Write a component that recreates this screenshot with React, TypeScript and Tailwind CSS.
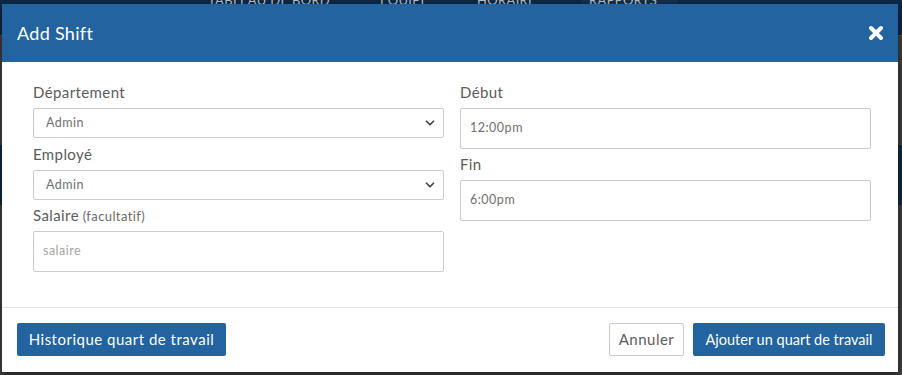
import { ChevronDown } from "lucide-react";

const font = { fontFamily: "Lato, 'Open Sans', sans-serif" };

function Field({ label, hint, value, placeholder, select, tall, className }: {
  label: string;
  hint?: string;
  value?: string;
  placeholder?: string;
  select?: boolean;
  tall?: boolean;
  className?: string;
}) {
  return (
    <div className={className}>
      <div className="h-[20px] leading-[20px] text-[15px] tracking-[0.4px] text-[#5c5c5c]">
        {label}
        {hint && <span className="text-[13px] text-[#6a6a6a]"> {hint}</span>}
      </div>
      <div
        className={`mt-[6px] flex items-center justify-between border border-[#ccc] rounded-[2px] bg-white ${
          tall ? "h-[41px] pl-[9px]" : "h-[30px] pl-[12px] pr-[6px]"
        }`}
      >
        <span className={`text-[12.5px] tracking-[0.5px] ${value ? "text-[#707070]" : "text-[#a5a5a5]"}`}>
          {value ?? placeholder}
        </span>
        {select && <ChevronDown size={14} strokeWidth={3} className="text-[#444]" />}
      </div>
    </div>
  );
}

export default function App() {
  return (
    <div className="relative w-[902px] h-[375px] overflow-hidden bg-[#3f3f3f]" style={font}>
      {/* page behind the modal */}
      <div className="h-[44px] bg-[#0e2946] flex text-[13px] tracking-wide text-[#b8c3cf] -mt-[9px]">
        <div className="w-[200px]" />
        <div className="px-[8px]">TABLEAU DE BORD</div>
        <div className="ml-[42px] w-[52px]">EQUIPE</div>
        <div className="ml-[45px] w-[60px]">HORAIRE</div>
        <div className="ml-[44px] pl-[8px] pr-[20px] bg-[#142f4e]">RAPPORTS</div>
      </div>
      <div className="h-[110px] border-t border-[#555]" />
      <div className="h-[60px] bg-[#0e2946]" />

      {/* modal */}
      <div className="absolute left-[2px] top-[4px] w-[896px] h-[368px] bg-white flex flex-col shadow-[0_3px_9px_rgba(0,0,0,0.5)]">
        <div className="h-[58px] bg-[#23639f] flex items-center justify-between pl-[15px] pr-[14px]">
          <span className="text-[18px] tracking-[0.3px] text-white">Add Shift</span>
          <svg width="16" height="16" viewBox="0 0 16 16">
            <path d="M3 3 L13 13 M13 3 L3 13" stroke="white" strokeWidth="4" strokeLinecap="round" />
          </svg>
        </div>

        <div className="grid grid-cols-2 gap-x-[16px] pl-[31px] pr-[27px] pt-[20px] h-[245px]">
          <div>
            <Field label="Département" value="Admin" select />
            <Field label="Employé" value="Admin" select className="mt-[6px]" />
            <Field label="Salaire" hint="(facultatif)" placeholder="salaire" tall className="mt-[5px]" />
          </div>
          <div>
            <Field label="Début" value="12:00pm" tall />
            <Field label="Fin" value="6:00pm" tall className="mt-[5px]" />
          </div>
        </div>

        <div className="flex-1 border-t border-[#e5e5e5] flex items-start justify-between pt-[15px] pl-[15px] pr-[13px]">
          <button className="h-[33px] w-[209px] bg-[#23639f] text-white text-[15px] tracking-[0.5px] rounded-[2px]">
            Historique quart de travail
          </button>
          <div className="flex gap-[9px]">
            <button className="h-[33px] w-[75px] border border-[#ccc] bg-white text-[#5c5c5c] text-[15px] tracking-[0.5px] rounded-[2px]">
              Annuler
            </button>
            <button className="h-[33px] w-[192px] bg-[#23639f] text-white text-[14.5px] rounded-[2px]">
              Ajouter un quart de travail
            </button>
          </div>
        </div>
      </div>
    </div>
  );
}
